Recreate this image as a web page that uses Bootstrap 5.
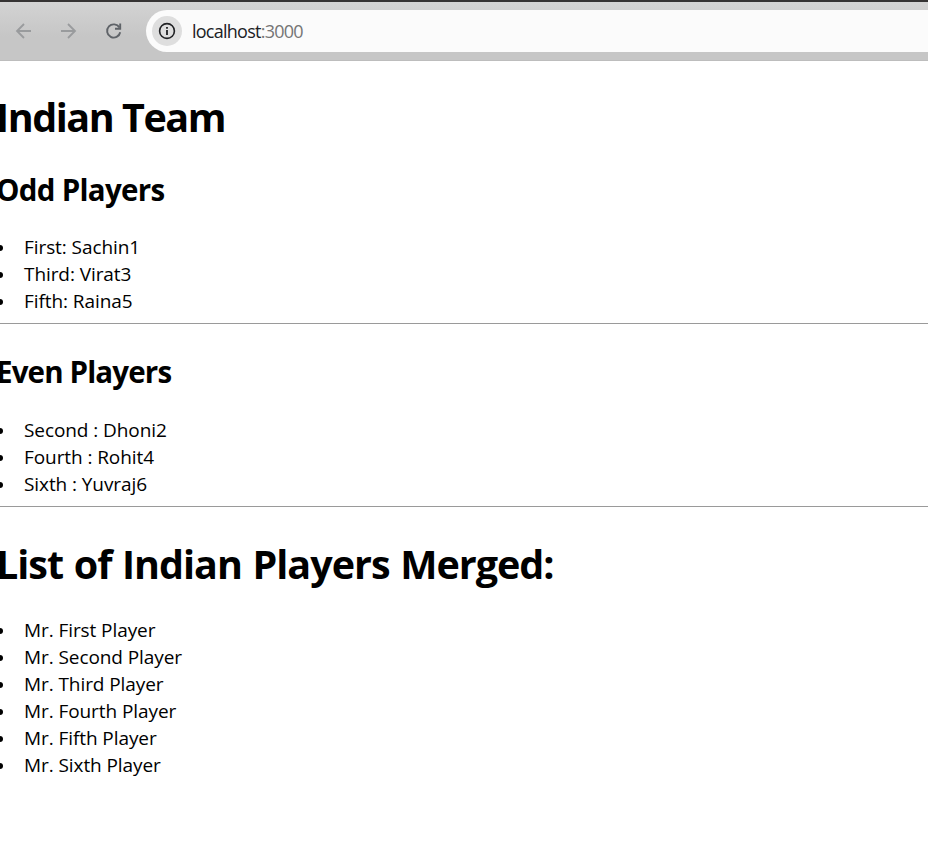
<!DOCTYPE html>
<html lang="en">
<head>
<meta charset="utf-8">
<meta name="viewport" content="width=device-width, initial-scale=1">
<title>localhost:3000</title>
<link href="https://cdn.jsdelivr.net/npm/bootstrap@5.3.0/dist/css/bootstrap.min.css" rel="stylesheet">
<style>
body{font-family:"Segoe UI","Open Sans","Noto Sans",sans-serif;color:#000;background:#fff;overflow:hidden}
.toolbar{height:61px;border-top:2px solid #353333;border-bottom:1px solid #bdbdbd;background:linear-gradient(#d3d3d3,#c6c6c6 60%,#c6c6c6)}
.nav-icons{width:146px;padding-left:14px;gap:25px}
.omnibox{height:42px;background:#fbfbfb;border-radius:21px 0 0 21px;padding-left:6px}
.site-info{width:30px;height:30px;background:#dedede}
.url{font-size:18px;line-height:24px;margin-left:10px;color:#202124;letter-spacing:-.75px}
.url span{color:#757575}
.page{margin-left:-4px}
h1,h2{font-weight:700;white-space:nowrap}
h1{font-size:39.5px;line-height:54px}
h2{font-size:29.5px;line-height:40px}
.t1{padding-top:29px;letter-spacing:-1.45px}
.t2{padding-top:26px;letter-spacing:-.7px}
.t3{padding-top:20px;letter-spacing:-.85px}
.t4{padding-top:22px;letter-spacing:-1px;word-spacing:1.3px}
.players{font-size:19px;line-height:27px;letter-spacing:-.08px}
.l1{padding-top:24px}
.l2{padding-top:25px}
.l3{padding-top:26px}
.players li::before{content:"";width:6px;height:6px;border-radius:50%;background:#000;margin:0 21px 0 1px}
hr{border-top:1px solid #9a9a9a;opacity:1}
</style>
<script src="https://cdn.jsdelivr.net/npm/bootstrap@5.3.0/dist/js/bootstrap.bundle.min.js"></script>
</head>
<body>
<header class="toolbar d-flex align-items-center">
  <nav class="nav-icons d-flex align-items-center flex-shrink-0">
    <svg width="20" height="20" viewBox="0 0 20 20" fill="none" stroke="#999b9d" stroke-width="1.8"><path d="M17 10H3M10 3l-7 7 7 7"/></svg>
    <svg width="20" height="20" viewBox="0 0 20 20" fill="none" stroke="#999b9d" stroke-width="1.8"><path d="M2 10h14M9 3l7 7-7 7"/></svg>
    <svg width="20" height="20" viewBox="0 0 20 20" fill="none" stroke="#5f6368" stroke-width="1.9"><path d="M16.2 11.2A6.6 6.6 0 1 1 15.4 6.6"/><path d="M16.2 2.6v5.2H11"/></svg>
  </nav>
  <div class="omnibox d-flex align-items-center flex-grow-1">
    <div class="site-info rounded-circle d-flex align-items-center justify-content-center">
      <svg width="18" height="18" viewBox="0 0 18 18"><circle cx="9" cy="9" r="7.4" fill="none" stroke="#202124" stroke-width="1.6"/><path d="M8.1 8h1.8v5H8.1zM8.1 5h1.8v1.8H8.1z" fill="#202124"/></svg>
    </div>
    <div class="url">localhost<span>:3000</span></div>
  </div>
</header>
<main class="page">
  <h1 class="t1 mb-0">Indian Team</h1>
  <h2 class="t2 mb-0">Odd Players</h2>
  <ul class="players l1 list-unstyled mb-0">
    <li class="d-flex align-items-center">First: Sachin1</li>
    <li class="d-flex align-items-center">Third: Virat3</li>
    <li class="d-flex align-items-center">Fifth: Raina5</li>
  </ul>
  <hr class="my-2">
  <h2 class="t3 mb-0">Even Players</h2>
  <ul class="players l2 list-unstyled mb-0">
    <li class="d-flex align-items-center">Second : Dhoni2</li>
    <li class="d-flex align-items-center">Fourth : Rohit4</li>
    <li class="d-flex align-items-center">Sixth : Yuvraj6</li>
  </ul>
  <hr class="my-2">
  <h1 class="t4 mb-0">List of Indian Players Merged:</h1>
  <ul class="players l3 list-unstyled mb-0">
    <li class="d-flex align-items-center">Mr. First Player</li>
    <li class="d-flex align-items-center">Mr. Second Player</li>
    <li class="d-flex align-items-center">Mr. Third Player</li>
    <li class="d-flex align-items-center">Mr. Fourth Player</li>
    <li class="d-flex align-items-center">Mr. Fifth Player</li>
    <li class="d-flex align-items-center">Mr. Sixth Player</li>
  </ul>
</main>
</body>
</html>
